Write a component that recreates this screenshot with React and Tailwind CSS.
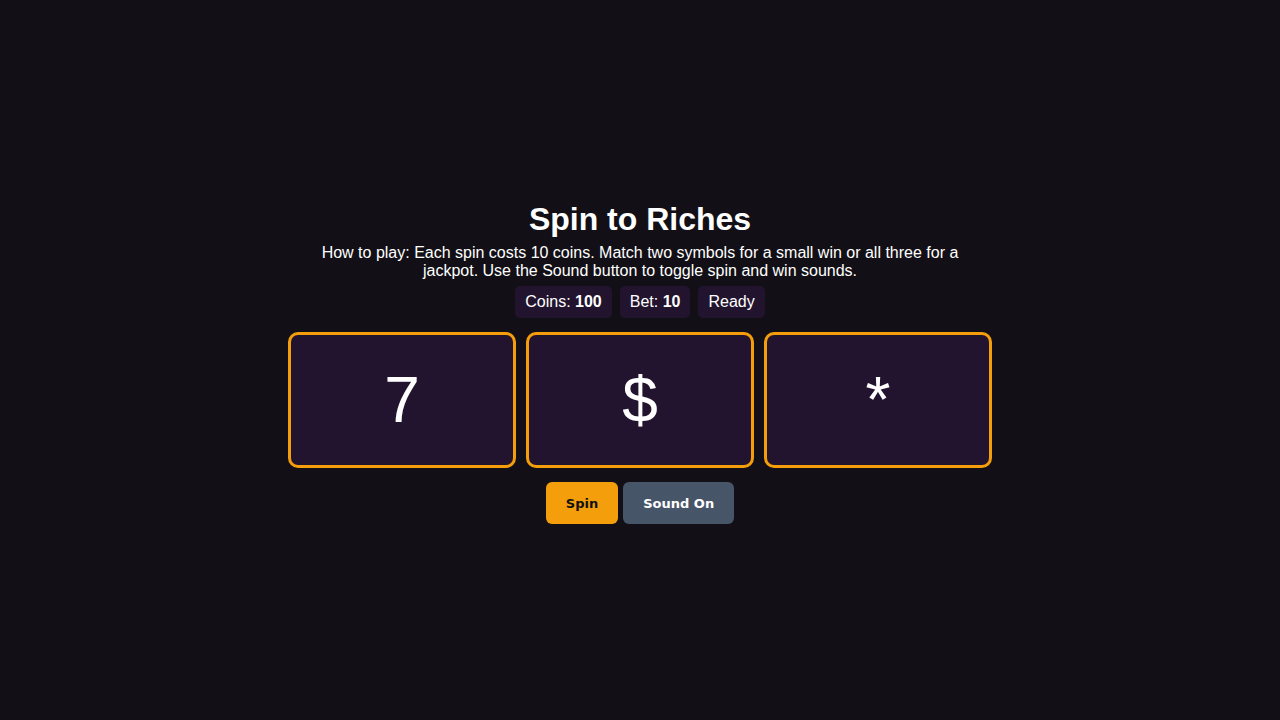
import React, { useState } from 'react'

const App = () => {
  const [sound, setSound] = useState(true)
  const reels = ['7', '$', '*']

  return (
    <div
      className="min-h-screen w-full bg-[#121016] text-white flex flex-col items-center justify-center pt-[4px]"
      style={{ fontFamily: '"Liberation Sans", Arial, sans-serif' }}
    >
      {/* Header */}
      <h1 className="text-[32px] leading-[37px] font-bold">Spin to Riches</h1>
      <p className="mt-[6px] max-w-[650px] text-center text-base leading-[18px]">
        How to play: Each spin costs 10 coins. Match two symbols for a small win or all three for a
        jackpot. Use the Sound button to toggle spin and win sounds.
      </p>

      {/* Stats */}
      <div className="mt-[6px] flex gap-2">
        <div className="bg-[#22142e] rounded-[5px] px-[10px] py-[6px] leading-[20px]">
          Coins: <span className="font-bold">100</span>
        </div>
        <div className="bg-[#22142e] rounded-[5px] px-[10px] py-[6px] leading-[20px]">
          Bet: <span className="font-bold">10</span>
        </div>
        <div className="bg-[#22142e] rounded-[5px] px-[10px] py-[6px] leading-[20px]">Ready</div>
      </div>

      {/* Reels */}
      <div className="mt-[14px] grid grid-cols-3 gap-[10px] w-[704px]">
        {reels.map((s, i) => (
          <div
            key={i}
            className="h-[136px] rounded-[10px] border-[3px] border-[#f59e0b] bg-[#22142e] flex items-center justify-center text-[64px] leading-none"
          >
            {s}
          </div>
        ))}
      </div>

      {/* Controls */}
      <div className="mt-[14px] flex gap-[5px]" style={{ fontFamily: '"DejaVu Sans", Verdana, sans-serif' }}>
        <button className="h-[42px] px-5 pt-[2px] rounded-[6px] bg-[#f59e0b] text-[#111] text-[13px] font-bold">
          Spin
        </button>
        <button
          onClick={() => setSound(!sound)}
          className="h-[42px] px-5 pt-[2px] rounded-[6px] bg-[#475569] text-white text-[13px] font-bold"
        >
          {sound ? 'Sound On' : 'Sound Off'}
        </button>
      </div>
    </div>
  )
}

export default App
